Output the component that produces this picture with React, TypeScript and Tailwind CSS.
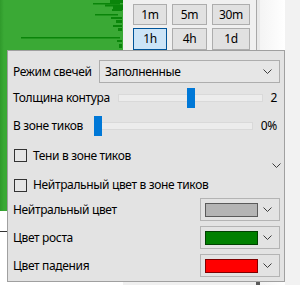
import React from "react";

function Chevron({ className = "" }: { className?: string }) {
  return (
    <svg width="9" height="5" viewBox="0 0 9 5" className={className}>
      <polyline points="0.5,0.5 4.5,4.5 8.5,0.5" fill="none" stroke="#3c3c3c" strokeWidth="1" />
    </svg>
  );
}

function Slider({ thumbLeft }: { thumbLeft: string }) {
  return (
    <div className="relative flex-1 h-[8px] bg-[#ececec] border border-[#d9d9d9]">
      <div className={`absolute top-1/2 -translate-y-1/2 w-[8px] h-[20px] bg-[#0078d7] ${thumbLeft}`} />
    </div>
  );
}

function Check({ label, extra }: { label: string; extra?: React.ReactNode }) {
  return (
    <div className="flex items-center gap-[6px] pl-[1px]">
      <div className="w-[13px] h-[13px] border border-[#333333] bg-[#e6e6e6]" />
      <span>{label}</span>
      {extra}
    </div>
  );
}

function ColorRow({ label, color, mt }: { label: string; color: string; mt: string }) {
  return (
    <div className={`flex items-center justify-between ${mt}`}>
      <span>{label}</span>
      <div className="w-[80px] h-[23px] border border-[#b4b4b4] flex items-center pl-[4px] pr-[7px] justify-between">
        <div className="w-[53px] h-[14px] border border-black/50" style={{ backgroundColor: color }} />
        <Chevron />
      </div>
    </div>
  );
}

export default function App() {
  const btn = "h-full flex items-center justify-center border text-[12px]";
  return (
    <div
      className="relative w-[300px] h-[285px] overflow-hidden bg-white text-black tracking-[-0.35px]"
      style={{ fontFamily: '"Noto Sans", "Open Sans", sans-serif' }}
    >
      {/* background window */}
      <div className="flex h-full">
        <div className="w-[123px] flex flex-col">
          <div className="h-[211px] bg-[#3aa935]">
            <svg width="123" height="211" viewBox="0 0 123 211">
              <defs>
                <linearGradient id="edge" x1="0" x2="1" y1="0" y2="0">
                  <stop offset="0" stopColor="#2f9a2b" />
                  <stop offset="1" stopColor="#3aa935" />
                </linearGradient>
              </defs>
              <rect x="0" y="0" width="4" height="211" fill="url(#edge)" />
              <g fill="#0a850a">
                <rect x="93" y="3" width="27" height="1.5" />
                <rect x="110" y="0" width="13" height="3" />
                <rect x="105" y="4.5" width="18" height="2" />
                <rect x="113" y="6" width="10" height="4" />
                <rect x="112" y="9" width="10" height="2" />
                <rect x="95" y="14" width="23" height="1.5" />
                <rect x="111" y="17" width="11" height="2" />
                <rect x="116" y="20" width="6" height="3" />
                <rect x="113" y="25" width="9" height="2" />
                <rect x="118" y="28" width="4" height="3" />
                <rect x="21" y="37" width="99" height="1.5" />
                <rect x="117" y="40" width="5" height="2" />
                <rect x="119" y="44" width="3" height="4" />
              </g>
            </svg>
          </div>
          <div className="flex-1 bg-white pt-[20px]">
            <div className="h-px w-[7px] bg-[#333333]" />
          </div>
        </div>
        <div className="w-[133px] bg-[#f0f0f0] pl-[10px] pt-[4px]">
          <div className="grid grid-cols-[34px_35px_38px] grid-rows-[21px_22px] gap-x-[5px] gap-y-[3px]">
            <div className={`${btn} bg-[#e1e1e1] border-[#adadad]`}>1m</div>
            <div className={`${btn} bg-[#e1e1e1] border-[#adadad]`}>5m</div>
            <div className={`${btn} bg-[#e1e1e1] border-[#adadad]`}>30m</div>
            <div className={`${btn} bg-[#cce4f7] border-[#005499]`}>1h</div>
            <div className={`${btn} bg-[#e1e1e1] border-[#adadad]`}>4h</div>
            <div className={`${btn} bg-[#e1e1e1] border-[#adadad]`}>1d</div>
          </div>
        </div>
        <div className="w-[4px] flex flex-col">
          <div className="flex-1 flex">
            <div className="w-[1px] bg-[#a8a8a8]" />
            <div className="flex-1 bg-[#e9e9e9]" />
          </div>
          <div className="h-[4px] bg-[#5a5a5a]" />
        </div>
        <div className="w-[25px] bg-gradient-to-r from-[#f4f4f4] to-white" />
        <div className="flex-1 bg-[#f2f2f2]" />
      </div>

      {/* popup */}
      <div className="absolute left-[7px] top-[50px] w-[278px] h-[232px] border border-[#a0a0a0] bg-[#e3e3e3] flex flex-col pl-[5px] pr-[4px] pt-[9px] text-[12px] leading-none">
        <div className="flex items-center h-[23px]">
          <span className="w-[86px]">Режим свечей</span>
          <div className="flex-1 h-full border border-[#adadad] bg-[#e6e6e6] flex items-center justify-between pl-[5px] pr-[7px]">
            <span>Заполненные</span>
            <Chevron />
          </div>
        </div>
        <div className="flex items-center h-[30px]">
          <span className="w-[105px]">Толщина контура</span>
          <Slider thumbLeft="left-[68px]" />
          <span className="w-[17px] text-right pr-[3px]">2</span>
        </div>
        <div className="flex items-center h-[26px]">
          <span className="w-[81px]">В зоне тиков</span>
          <Slider thumbLeft="-left-[1px]" />
          <span className="w-[27px] text-right pr-[3px]">0%</span>
        </div>
        <div className="flex items-center justify-between h-[33px]">
          <Check label="Тени в зоне тиков" />
          <Chevron className="self-end mb-[4px] mr-[-1px]" />
        </div>
        <div className="flex items-center h-[26px]">
          <Check label="Нейтральный цвет в зоне тиков" />
        </div>
        <ColorRow label="Нейтральный цвет" color="#b4b4b4" mt="mt-0" />
        <ColorRow label="Цвет роста" color="#008000" mt="mt-[5px]" />
        <ColorRow label="Цвет падения" color="#ff0000" mt="mt-[5px]" />
      </div>
    </div>
  );
}
